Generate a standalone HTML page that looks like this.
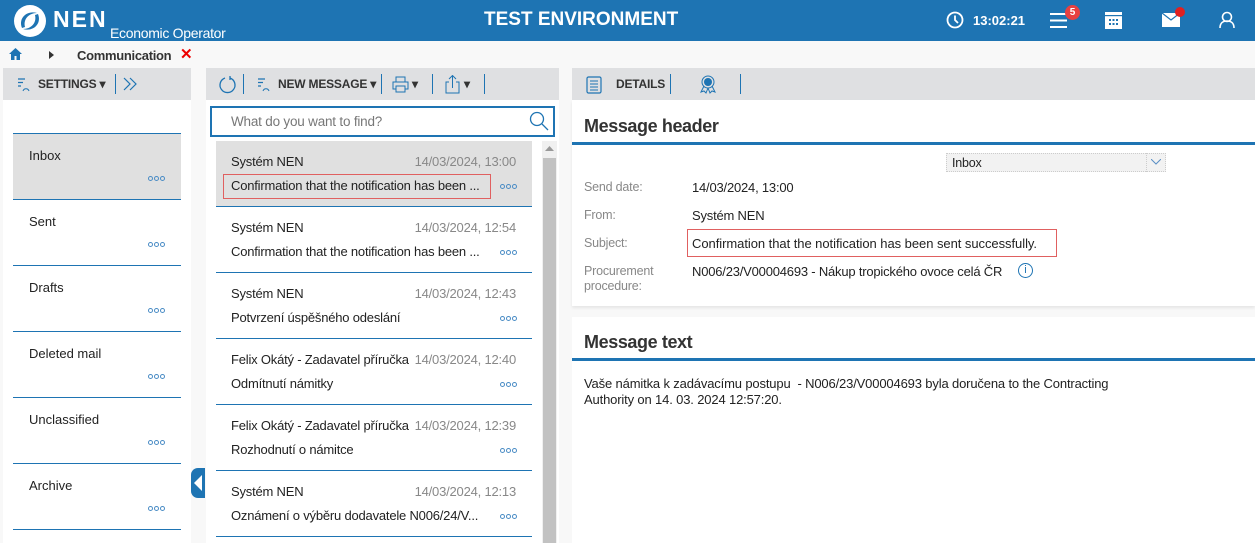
<!DOCTYPE html>
<html><head><meta charset="utf-8"><style>
*{box-sizing:border-box;margin:0;padding:0}
body{width:1255px;height:543px;overflow:hidden;background:#f8f8f8;font-family:"Liberation Sans",sans-serif;color:#222;position:relative}
.a{position:absolute}
.hdr{left:0;top:0;width:1255px;height:41px;background:#1e74b3;color:#fff}
.tb{background:#dfe0e2;height:32px;top:68px}
.tbt{font-size:12px;font-weight:bold;color:#333;letter-spacing:-.2px}
.sep{width:1px;height:20px;background:#1e74b3;top:74px}
.fold{left:13px;width:168px;height:66px;border-bottom:1px solid #1e74b3;font-size:13px}
.fold span{position:absolute;left:16px;top:14px}
.dots{position:absolute;font-size:0}
.dots i{display:inline-block;width:5px;height:5px;border:1.2px solid #4a8cc5;border-radius:50%;margin-right:1px}
.msg{left:216px;width:316px;height:66px;border-bottom:1.5px solid #1e74b3;font-size:13px}
.msg .f{position:absolute;left:15px;top:13px;letter-spacing:-.2px}
.msg .d{position:absolute;right:16px;top:13px;color:#888;letter-spacing:-.2px}
.msg .s{position:absolute;left:15px;top:37px;letter-spacing:-.2px;white-space:nowrap}
.lbl{left:584px;font-size:12.5px;color:#888;letter-spacing:-.2px}
.val{left:692px;font-size:13px;color:#222;letter-spacing:-.2px}
</style></head><body>
<div class="a hdr">
  <svg class="a" style="left:13px;top:4px" width="34" height="34" viewBox="0 0 34 34"><circle cx="17" cy="17" r="16" fill="#fff"/><path d="M9 24 C5 14 14 6 24 9 C16 9 10 15 12 23Z" fill="#1e74b3"/><path d="M25 10 C29 20 20 28 10 25 C18 25 24 19 22 11Z" fill="#1e74b3"/></svg>
  <div class="a" style="left:53px;top:6px;font-size:23px;font-weight:bold;letter-spacing:2px">NEN</div>
  <div class="a" style="left:110px;top:25px;font-size:14px;letter-spacing:-.3px">Economic Operator</div>
  <div class="a" style="left:484px;top:9px;font-size:19px;font-weight:bold">TEST ENVIRONMENT</div>
  <svg class="a" style="left:946px;top:11px" width="18" height="18" viewBox="0 0 18 18"><circle cx="9" cy="9" r="7.5" fill="none" stroke="#fff" stroke-width="1.8"/><path d="M9 4.5V9l3 3" fill="none" stroke="#fff" stroke-width="1.8"/></svg>
  <div class="a" style="left:973px;top:13px;font-size:13px;font-weight:bold">13:02:21</div>
  <svg class="a" style="left:1050px;top:12px" width="18" height="17"><path d="M0 2h17M0 8.5h17M0 15h17" stroke="#fff" stroke-width="2"/></svg>
  <div class="a" style="left:1065px;top:5px;width:15px;height:15px;border-radius:50%;background:#e84040;font-size:10px;font-weight:bold;text-align:center;line-height:15px">5</div>
  <svg class="a" style="left:1105px;top:12px" width="18" height="17"><rect x="0" y="0" width="17" height="17" fill="#fff"/><rect x="0" y="3" width="17" height="1.2" fill="#1e74b3"/><g fill="#1e74b3"><rect x="4" y="7" width="2" height="2"/><rect x="7.5" y="7" width="2" height="2"/><rect x="11" y="7" width="2" height="2"/><rect x="4" y="11" width="2" height="2"/><rect x="7.5" y="11" width="2" height="2"/><rect x="11" y="11" width="2" height="2"/></g></svg>
  <svg class="a" style="left:1162px;top:13px" width="18" height="14"><rect width="18" height="14" fill="#fff"/><path d="M0 0l9 7 9-7" fill="none" stroke="#1e74b3" stroke-width="1.2"/></svg>
  <div class="a" style="left:1175px;top:7px;width:10px;height:10px;border-radius:50%;background:#e02020"></div>
  <svg class="a" style="left:1219px;top:11px" width="16" height="18"><circle cx="8" cy="6" r="4.5" fill="none" stroke="#fff" stroke-width="1.6"/><path d="M1 17c0-5 3-7 7-7s7 2 7 7" fill="none" stroke="#fff" stroke-width="1.6"/></svg>
</div>
<svg class="a" style="left:9px;top:48px" width="13" height="12"><path d="M6.5 0L0 6h2v6h3.5V8h2v4H11V6h2z" fill="#1e74b3"/></svg>
<svg class="a" style="left:49px;top:51px" width="6" height="8"><path d="M0 0l5 4-5 4z" fill="#333"/></svg>
<div class="a" style="left:77px;top:48px;font-size:13px;font-weight:bold;color:#333;letter-spacing:-.3px">Communication</div>
<div class="a" style="left:180px;top:45px;font-size:15px;font-weight:bold;color:#e00">✕</div>

<div class="a tb" style="left:3px;width:188px"></div>
<svg class="a" style="left:17px;top:77px" width="16" height="16"><path d="M1 2h7M1 5.5h5M1 9h3" stroke="#1e74b3" stroke-width="1.2"/><path d="M6 14c1-3 5-3 6 0" fill="none" stroke="#1e74b3" stroke-width="1"/></svg>
<div class="a tbt" style="left:38px;top:77px">SETTINGS ▾</div>
<div class="a sep" style="left:115px"></div>
<svg class="a" style="left:122px;top:77px" width="16" height="14"><path d="M2 1l6 6-6 6M8 1l6 6-6 6" fill="none" stroke="#1e74b3" stroke-width="1.2"/></svg>
<div class="a" style="left:3px;top:100px;width:188px;height:443px;background:#fff"></div>
<div class="a" style="left:13px;top:133px;width:168px;height:1px;background:#1e74b3"></div>
<div class="a fold" style="top:134px;background:#e0e0e0"><span>Inbox</span><div class="dots" style="left:135px;top:42px"><i></i><i></i><i></i></div></div>
<div class="a fold" style="top:200px"><span>Sent</span><div class="dots" style="left:135px;top:42px"><i></i><i></i><i></i></div></div>
<div class="a fold" style="top:266px"><span>Drafts</span><div class="dots" style="left:135px;top:42px"><i></i><i></i><i></i></div></div>
<div class="a fold" style="top:332px"><span>Deleted mail</span><div class="dots" style="left:135px;top:42px"><i></i><i></i><i></i></div></div>
<div class="a fold" style="top:398px"><span>Unclassified</span><div class="dots" style="left:135px;top:42px"><i></i><i></i><i></i></div></div>
<div class="a fold" style="top:464px"><span>Archive</span><div class="dots" style="left:135px;top:42px"><i></i><i></i><i></i></div></div>
<div class="a" style="left:191px;top:468px;width:14px;height:30px;background:#1e74b3;border-radius:7px 0 0 7px"></div>
<svg class="a" style="left:193px;top:475px" width="10" height="16"><path d="M9 0v16L1 8z" fill="#fff"/></svg>

<div class="a tb" style="left:206px;width:353px"></div>
<svg class="a" style="left:218px;top:75px" width="19" height="19"><path d="M7 3A7.5 7.5 0 1 0 12 3" fill="none" stroke="#1e74b3" stroke-width="1.3"/><path d="M12 1v4" stroke="#1e74b3" stroke-width="1.3"/></svg>
<div class="a sep" style="left:243px"></div>
<svg class="a" style="left:257px;top:77px" width="16" height="16"><path d="M1 2h7M1 5.5h5M1 9h3" stroke="#1e74b3" stroke-width="1.2"/><path d="M6 14c1-3 5-3 6 0" fill="none" stroke="#1e74b3" stroke-width="1"/></svg>
<div class="a tbt" style="left:278px;top:77px">NEW MESSAGE ▾</div>
<div class="a sep" style="left:381px"></div>
<svg class="a" style="left:392px;top:76px" width="18" height="18"><rect x="4" y="1" width="9" height="5" fill="none" stroke="#1e74b3"/><rect x="1" y="6" width="15" height="7" fill="none" stroke="#1e74b3"/><rect x="4" y="10" width="9" height="6" fill="#dfe0e2" stroke="#1e74b3"/></svg>
<div class="a tbt" style="left:412px;top:77px">▾</div>
<div class="a sep" style="left:432px"></div>
<svg class="a" style="left:444px;top:75px" width="18" height="19"><path d="M5 7H2v11h13V7h-3" fill="none" stroke="#1e74b3"/><path d="M8.5 13V1M5 4l3.5-3.5L12 4" fill="none" stroke="#1e74b3"/></svg>
<div class="a tbt" style="left:464px;top:77px">▾</div>
<div class="a sep" style="left:484px"></div>
<div class="a" style="left:206px;top:100px;width:353px;height:443px;background:#fff"></div>
<div class="a" style="left:210px;top:106px;width:345px;height:31px;border:2px solid #1e74b3;background:#fff"></div>
<div class="a" style="left:231px;top:114px;font-size:13.5px;color:#777;letter-spacing:-.2px">What do you want to find?</div>
<svg class="a" style="left:529px;top:111px" width="20" height="20"><circle cx="8" cy="8" r="6.5" fill="none" stroke="#1e74b3" stroke-width="1.3"/><path d="M13 13l6 6" stroke="#1e74b3" stroke-width="1.3"/></svg>
<div class="a msg" style="top:141px;background:#e0e0e0"><div class="f">Systém NEN</div><div class="d">14/03/2024, 13:00</div><div class="s">Confirmation that the notification has been ...</div><div class="dots" style="left:284px;top:43px"><i></i><i></i><i></i></div></div>
<div class="a" style="left:223px;top:174px;width:268px;height:25px;border:1.5px solid #e06060"></div>
<div class="a msg" style="top:207px"><div class="f">Systém NEN</div><div class="d">14/03/2024, 12:54</div><div class="s">Confirmation that the notification has been ...</div><div class="dots" style="left:284px;top:43px"><i></i><i></i><i></i></div></div>
<div class="a msg" style="top:273px"><div class="f">Systém NEN</div><div class="d">14/03/2024, 12:43</div><div class="s">Potvrzení úspěšného odeslání</div><div class="dots" style="left:284px;top:43px"><i></i><i></i><i></i></div></div>
<div class="a msg" style="top:339px"><div class="f">Felix Okátý - Zadavatel příručka</div><div class="d" style="right:16px">14/03/2024, 12:40</div><div class="s">Odmítnutí námitky</div><div class="dots" style="left:284px;top:43px"><i></i><i></i><i></i></div></div>
<div class="a msg" style="top:405px"><div class="f">Felix Okátý - Zadavatel příručka</div><div class="d">14/03/2024, 12:39</div><div class="s">Rozhodnutí o námitce</div><div class="dots" style="left:284px;top:43px"><i></i><i></i><i></i></div></div>
<div class="a msg" style="top:471px"><div class="f">Systém NEN</div><div class="d">14/03/2024, 12:13</div><div class="s">Oznámení o výběru dodavatele N006/24/V...</div><div class="dots" style="left:284px;top:43px"><i></i><i></i><i></i></div></div>
<div class="a" style="left:542px;top:141px;width:15px;height:402px;background:#f0f0f0"></div>
<div class="a" style="left:543px;top:158px;width:13px;height:385px;background:#c2c2c2"></div>
<svg class="a" style="left:545px;top:146px" width="9" height="6"><path d="M0 5l4.5-5L9 5z" fill="#999"/></svg>

<div class="a tb" style="left:572px;width:683px"></div>
<svg class="a" style="left:586px;top:76px" width="16" height="18"><rect x="1" y="1" width="14" height="16" rx="1.5" fill="none" stroke="#1e74b3" stroke-width="1.2"/><path d="M4 5h8M4 8h8M4 11h8M4 14h8" stroke="#1e74b3"/></svg>
<div class="a tbt" style="left:616px;top:77px">DETAILS</div>
<div class="a sep" style="left:670px"></div>
<svg class="a" style="left:699px;top:75px" width="18" height="19"><circle cx="9" cy="7" r="6" fill="none" stroke="#1e74b3"/><circle cx="9" cy="7" r="4" fill="#1e74b3"/><path d="M5 11l-3 6 3-1 2 2 2-5M13 11l3 6-3-1-2 2-2-5" fill="none" stroke="#1e74b3"/></svg>
<div class="a sep" style="left:740px"></div>
<div class="a" style="left:572px;top:100px;width:683px;height:206px;background:#fff;box-shadow:0 2px 3px rgba(0,0,0,.08)"></div>
<div class="a" style="left:584px;top:116px;font-size:18px;font-weight:bold;color:#333;letter-spacing:-.4px">Message header</div>
<div class="a" style="left:572px;top:142px;width:683px;height:3px;background:#1e74b3"></div>
<div class="a" style="left:946px;top:153px;width:220px;height:19px;background:#f2f2f2;border:1px dotted #ccc;font-size:12.5px;padding:2px 5px;letter-spacing:-.2px">Inbox</div>
<div class="a" style="left:1146px;top:153px;width:20px;height:19px;border-left:1px dotted #ccc"></div>
<svg class="a" style="left:1151px;top:159px" width="10" height="6"><path d="M0 0l5 5 5-5" fill="none" stroke="#5a8fc5"/></svg>
<div class="a lbl" style="top:180px">Send date:</div><div class="a val" style="top:180px">14/03/2024, 13:00</div>
<div class="a lbl" style="top:208px">From:</div><div class="a val" style="top:208px">Systém NEN</div>
<div class="a lbl" style="top:236px">Subject:</div><div class="a val" style="top:236px;letter-spacing:-.05px">Confirmation that the notification has been sent successfully.</div>
<div class="a" style="left:687px;top:229px;width:370px;height:28px;border:1.5px solid #e06060"></div>
<div class="a lbl" style="top:264px;line-height:15px">Procurement<br>procedure:</div><div class="a val" style="top:264px">N006/23/V00004693 - Nákup tropického ovoce celá ČR</div>
<div class="a" style="left:1018px;top:263px;width:15px;height:15px;border:1.2px solid #1e74b3;border-radius:50%;color:#1e74b3;font-size:11px;text-align:center;line-height:13px">i</div>
<div class="a" style="left:572px;top:317px;width:683px;height:226px;background:#fff"></div>
<div class="a" style="left:584px;top:332px;font-size:18px;font-weight:bold;color:#333;letter-spacing:-.4px">Message text</div>
<div class="a" style="left:572px;top:358px;width:683px;height:3px;background:#1e74b3"></div>
<div class="a" style="left:584px;top:376px;font-size:13px;line-height:15.5px;letter-spacing:-.15px;color:#222">Vaše námitka k zadávacímu postupu &nbsp;- N006/23/V00004693 byla doručena to the Contracting<br>Authority on 14. 03. 2024 12:57:20.</div>
</body></html>
